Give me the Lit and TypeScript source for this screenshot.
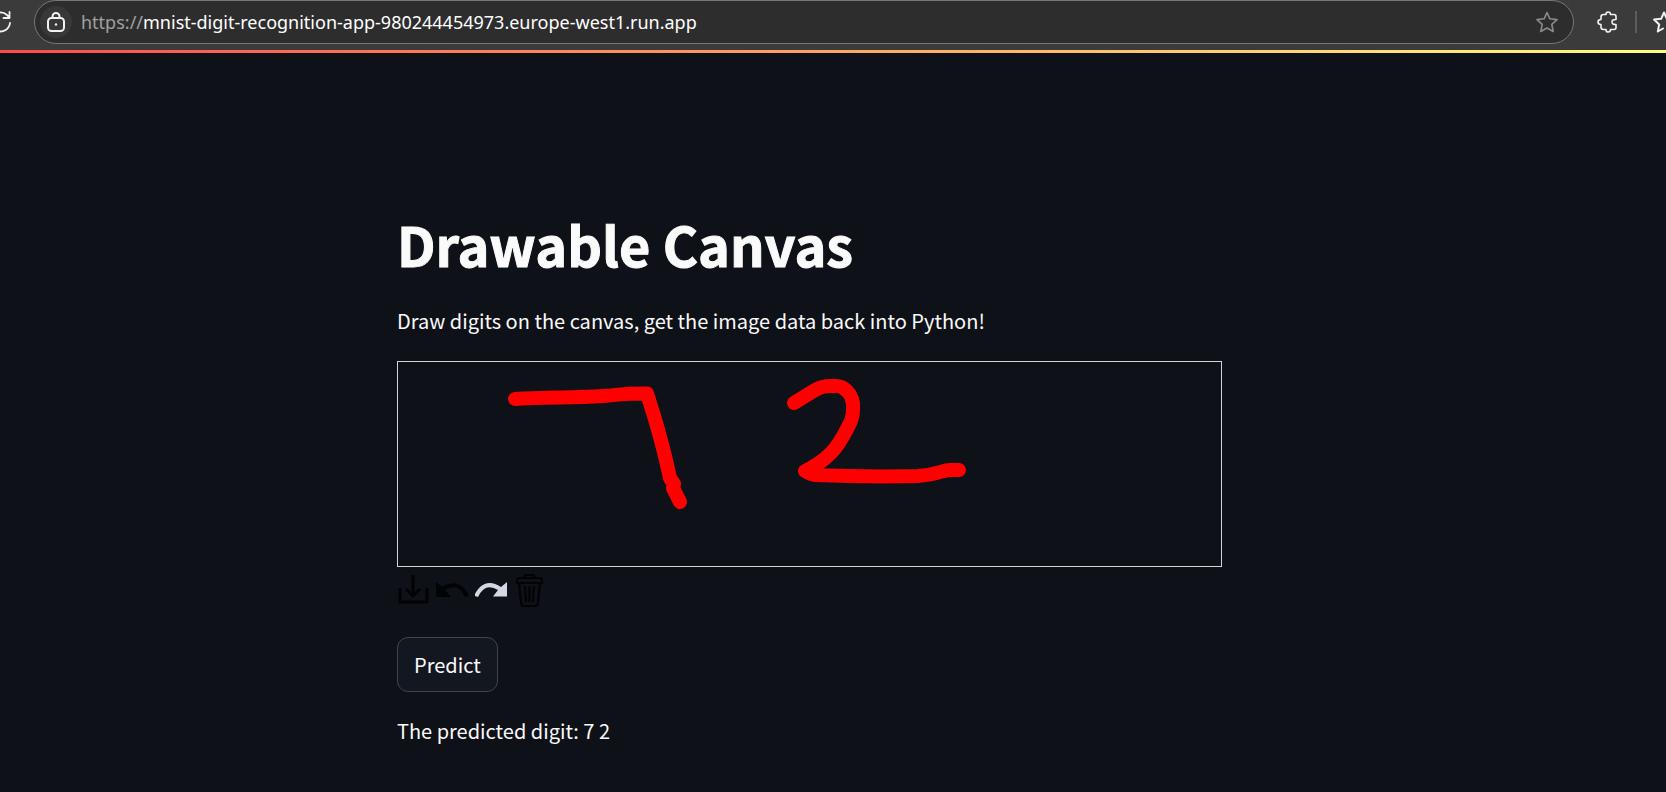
import { LitElement, html, css, svg } from "lit";
import { customElement, property } from "lit/decorators.js";

@customElement("browser-bar")
class BrowserBar extends LitElement {
  @property() host = "";
  static styles = css`
    :host { display: flex; align-items: flex-start; height: 50px; background: #3b3b3b; overflow: hidden; }
    button { appearance: none; border: 0; background: none; padding: 0; display: grid; place-items: center; flex: none; color: #f2f2f2; }
    svg { display: block; fill: none; stroke: currentColor; stroke-width: 2; stroke-linecap: round; stroke-linejoin: round; overflow: visible; }
    .reload { width: 34px; height: 44px; }
    .reload svg { margin-left: -32px; }
    .address { flex: 1; min-width: 0; height: 44px; box-sizing: border-box; border: 1px solid #767676; border-radius: 22px; background: #2d2d2d; display: flex; align-items: center; padding: 0 14px 0 5px; }
    .lock { width: 32px; height: 32px; border-radius: 50%; background: #383838; }
    .url { flex: 1; margin-left: 9px; font: 18px/28px "Noto Sans", sans-serif; color: #fff; text-decoration: none; white-space: nowrap; }
    .scheme { color: #a0a0a0; }
    .star { width: 24px; height: 44px; color: #8a8a8a; }
    .star svg, .puzzle svg { stroke-width: 1.6; }
    .puzzle { width: 22px; height: 44px; margin-left: 23px; }
    .divider { width: 2px; height: 22px; margin: 11px 16px 0; background: #5c5c5c; flex: none; }
    .favs { width: 13px; height: 44px; justify-content: start; }
  `;
  private star = svg`<path d="M11 1.500 L13.900 7.800 L21 8.600 L15.800 13.400 L17.200 20.500 L11 17 L4.800 20.500 L6.200 13.400 L1 8.600 L8.100 7.800 Z"></path>`;
  render() {
    return html`
      <button class="reload" aria-label="Reload">
        <svg width="22" height="22" viewBox="0 0 22 22"><path d="M20 12a9.500 9.500 0 1 1-3-8l2 2M19.500 1v6h-6" stroke-width="1.800"></path></svg>
      </button>
      <div class="address">
        <button class="lock" aria-label="Site information">
          <svg width="18" height="20" viewBox="0 0 18 20" stroke-width="1.800"><rect x="1" y="6" width="16" height="13" rx="3.500"></rect><path d="M5.500 6V4.500a3.500 3.500 0 0 1 7 0V6"></path><circle cx="9" cy="12.500" r="1.200" fill="currentColor" stroke="none"></circle></svg>
        </button>
        <a class="url" href="#"><span class="scheme">https://</span>${this.host}</a>
        <button class="star" aria-label="Add to favourites"><svg width="22" height="22" viewBox="0 0 22 22">${this.star}</svg></button>
      </div>
      <button class="puzzle" aria-label="Extensions">
        <svg width="22" height="22" viewBox="0 0 22 22"><path d="M4 6Q4 3.500 6.500 3.500H9Q9 1 11.200 1T13.500 3.500H17Q19 3.500 19 5.500V8.500Q15 8.300 15 11T19 13.500V16.500Q19 18.500 17 18.500H13.500Q13.500 21 11.200 21T9 18.500H6.500Q4 18.500 4 16V13.500Q1 13.500 1 11T4 8.500Z"></path></svg>
      </button>
      <span class="divider"></span>
      <button class="favs" aria-label="Favourites"><svg width="22" height="22" viewBox="0 0 22 22"><path d="M10 17.500L4.800 20.500L6.200 13.400L1 8.600L8.100 7.800L11 1.500L13.900 7.800L21 8.600"></path></svg></button>
    `;
  }
}

@customElement("digit-canvas")
class DigitCanvas extends LitElement {
  static styles = css`
    :host { display: block; }
    .board { display: block; box-sizing: border-box; width: 100%; max-width: 825px; height: 206px; border: 1px solid #d3d6d8; }
    .stroke { fill: none; stroke: #f00; stroke-width: 14; stroke-linecap: round; stroke-linejoin: round; }
    .tools { display: flex; height: 46px; align-items: center; color: #020304; }
    button { appearance: none; border: 0; background: none; padding: 0; width: 33px; height: 33px; margin-right: 6px; color: inherit; }
    .redo { color: #d5d8e3; }
    svg { display: block; }
  `;
  render() {
    return html`
      <svg class="board" role="img" aria-label="Handwritten digits">
        <path class="stroke" d="M117 37C145 35 175 36 205 34C220 33 228 31 249 31.500C258 59 265 83 272 116L276 122L275 126L282 140"></path>
        <path class="stroke" d="M396 41L417 28Q424 24 432 24H439Q444 24 449 29Q456 36 455 47Q455 57 450 65C446 73 441 83 433 91Q422 102 407 109Q411 112 417 113C440 114 480 115 520 114C538 113 545 108 552 108H561"></path>
      </svg>
      <div class="tools">
        <button aria-label="Save"><svg viewBox="0 0 33 33" fill="none" stroke="currentColor" stroke-width="3" stroke-linejoin="round"><path d="M3 14V28H30V14M16 1V22M9 15L16 22L23 15"></path></svg></button>
        <button aria-label="Undo"><svg viewBox="0 0 33 33"><path fill="currentColor" d="M0 8L6 13Q19 5 28 14Q31 17 33 22L29 23Q22 8 9 16L15 23H0Z"></path></svg></button>
        <button class="redo" aria-label="Redo"><svg viewBox="0 0 33 33"><path fill="currentColor" d="M32 8L26 13Q14 5 5 13Q2 16 -1 21.500L3 23Q10 8 23 16L18 22.500H32Z"></path></svg></button>
        <button aria-label="Clear"><svg viewBox="0 0 33 33" fill="none" stroke="currentColor" stroke-width="2.200"><path d="M11 3V1H20V3M3 9V6Q3 4 6 4H25Q28 4 28 6V9ZM5 9L7 29Q7 32 10 32H21Q24 32 24 29L26 9M11 12L12 28M15.500 12V28M20 12L19 28"></path></svg></button>
      </div>
    `;
  }
}

@customElement("app-root")
class AppRoot extends LitElement {
  static styles = css`
    :host { display: block; min-height: 100vh; background: #0e1117; color: #fafafa; font-family: "Noto Sans CJK SC", sans-serif; font-size: 20px; line-height: 36px; }
    .accent { height: 3px; background: linear-gradient(90deg, #ff4b4b, #fffd80); }
    main { max-width: 872px; margin: 0 auto; padding: 155px 0 40px; }
    h1 { margin: 0; font-size: 54px; line-height: 72px; font-weight: 700; -webkit-text-stroke: 1px currentColor; }
    p { margin: 0; }
    .intro { margin: 23px 0 22px; }
    .predict { appearance: none; display: block; box-sizing: border-box; height: 55px; padding: 0 16px; margin: 24px 0 21px; border: 1px solid #41444c; border-radius: 11px; background: #131720; color: inherit; font: inherit; }
  `;
  render() {
    return html`
      <browser-bar host="mnist-digit-recognition-app-980244454973.europe-west1.run.app"></browser-bar>
      <div class="accent"></div>
      <main>
        <h1>Drawable Canvas</h1>
        <p class="intro">Draw digits on the canvas, get the image data back into Python!</p>
        <digit-canvas></digit-canvas>
        <button class="predict">Predict</button>
        <p>The predicted digit: 7 2</p>
      </main>
    `;
  }
}
